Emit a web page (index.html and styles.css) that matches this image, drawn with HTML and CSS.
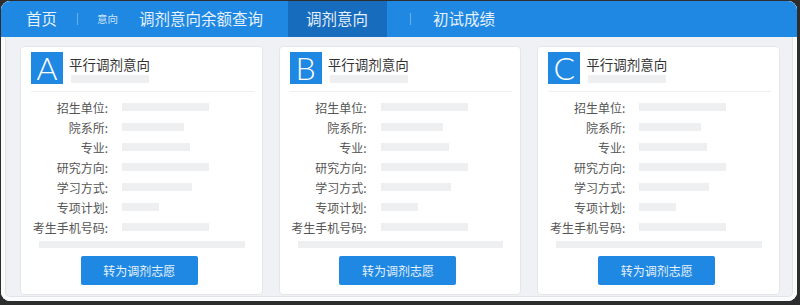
FILE: index.html
```html
<!DOCTYPE html>
<html lang="zh-CN">
<head>
<meta charset="utf-8">
<title>调剂意向</title>
<link rel="stylesheet" href="styles.css">
</head>
<body>
<div class="window">
  <nav class="nav">
    <span class="nav-item home">首页</span>
    <span class="sep"></span>
    <span class="nav-item small">意向</span>
    <span class="nav-item query">调剂意向余额查询</span>
    <span class="nav-item active">调剂意向</span>
    <span class="sep sep2"></span>
    <span class="nav-item score">初试成绩</span>
  </nav>
  <main class="cards">
    <section class="card">
      <div class="card-head">
        <div class="letter">A</div>
        <div class="head-text">
          <div class="title">平行调剂意向</div>
          <div class="bar title-bar"></div>
        </div>
      </div>
      <div class="rows">
        <div class="row"><span class="label">招生单位:</span><span class="bar" style="width:87px"></span></div>
        <div class="row"><span class="label">院系所:</span><span class="bar" style="width:62px"></span></div>
        <div class="row"><span class="label">专业:</span><span class="bar" style="width:68px"></span></div>
        <div class="row"><span class="label">研究方向:</span><span class="bar" style="width:87px"></span></div>
        <div class="row"><span class="label">学习方式:</span><span class="bar" style="width:70px"></span></div>
        <div class="row"><span class="label">专项计划:</span><span class="bar" style="width:37px"></span></div>
        <div class="row"><span class="label">考生手机号码:</span><span class="bar" style="width:87px"></span></div>
      </div>
      <div class="bar wide-bar"></div>
      <button class="btn">转为调剂志愿</button>
    </section>
    <section class="card">
      <div class="card-head">
        <div class="letter">B</div>
        <div class="head-text">
          <div class="title">平行调剂意向</div>
          <div class="bar title-bar"></div>
        </div>
      </div>
      <div class="rows">
        <div class="row"><span class="label">招生单位:</span><span class="bar" style="width:87px"></span></div>
        <div class="row"><span class="label">院系所:</span><span class="bar" style="width:62px"></span></div>
        <div class="row"><span class="label">专业:</span><span class="bar" style="width:68px"></span></div>
        <div class="row"><span class="label">研究方向:</span><span class="bar" style="width:87px"></span></div>
        <div class="row"><span class="label">学习方式:</span><span class="bar" style="width:70px"></span></div>
        <div class="row"><span class="label">专项计划:</span><span class="bar" style="width:37px"></span></div>
        <div class="row"><span class="label">考生手机号码:</span><span class="bar" style="width:87px"></span></div>
      </div>
      <div class="bar wide-bar"></div>
      <button class="btn">转为调剂志愿</button>
    </section>
    <section class="card">
      <div class="card-head">
        <div class="letter">C</div>
        <div class="head-text">
          <div class="title">平行调剂意向</div>
          <div class="bar title-bar"></div>
        </div>
      </div>
      <div class="rows">
        <div class="row"><span class="label">招生单位:</span><span class="bar" style="width:87px"></span></div>
        <div class="row"><span class="label">院系所:</span><span class="bar" style="width:62px"></span></div>
        <div class="row"><span class="label">专业:</span><span class="bar" style="width:68px"></span></div>
        <div class="row"><span class="label">研究方向:</span><span class="bar" style="width:87px"></span></div>
        <div class="row"><span class="label">学习方式:</span><span class="bar" style="width:70px"></span></div>
        <div class="row"><span class="label">专项计划:</span><span class="bar" style="width:37px"></span></div>
        <div class="row"><span class="label">考生手机号码:</span><span class="bar" style="width:87px"></span></div>
      </div>
      <div class="bar wide-bar"></div>
      <button class="btn">转为调剂志愿</button>
    </section>
  </main>
</div>
</body>
</html>
```

FILE: styles.css
```css
* { box-sizing: border-box; }

html, body {
  margin: 0;
  padding: 0;
  width: 800px;
  height: 305px;
  background: #2d2d2d;
  overflow: hidden;
  font-family: "Noto Sans CJK SC", "Noto Sans", sans-serif;
}

.window {
  margin: 1px 3px 0 1px;
  width: 796px;
  height: 300px;
  border-radius: 9px;
  overflow: hidden;
  background: #eff1f4;
  box-shadow: inset 0 0 0 4px #fafbfc, inset 0 0 0 5px #e1e3e6;
  display: flex;
  flex-direction: column;
}

.nav {
  height: 36px;
  flex: none;
  background: #1e88e2;
  display: flex;
  align-items: stretch;
  padding-left: 25px;
  color: #e6f1fc;
}

.nav-item {
  display: flex;
  align-items: center;
  font-size: 15.5px;
  line-height: 1;
  white-space: nowrap;
}

.sep {
  width: 1px;
  height: 12px;
  align-self: center;
  background: rgba(255, 255, 255, 0.35);
  margin-left: 20px;
}

.nav-item.small {
  font-size: 10.5px;
  margin-left: 19px;
  color: #cfe4f8;
}

.nav-item.query { margin-left: 21px; }

.nav-item.active {
  margin-left: 25px;
  padding: 0 19px 0 18px;
  background: #176cbd;
}

.sep2 { margin-left: 23px; }

.nav-item.score { margin-left: 22px; }

.cards {
  flex: 1;
  display: grid;
  grid-template-columns: repeat(3, 1fr);
  column-gap: 16px;
  padding: 9px 17px 6px 19px;
}

.card {
  background: #ffffff;
  border: 1px solid #e4e6e9;
  border-radius: 4px;
  padding: 5px 8px 8px 10px;
  display: flex;
  flex-direction: column;
}

.card-head {
  display: flex;
  gap: 6px;
  padding-bottom: 7px;
  border-bottom: 1px solid #eceef0;
}

.letter {
  width: 32px;
  height: 32px;
  flex: none;
  background: #1e88e2;
  color: #ffffff;
  font-family: Lato, "Liberation Sans", Arial, sans-serif;
  font-weight: 300;
  font-size: 32px;
  line-height: 32px;
  text-align: center;
}

.head-text {
  display: flex;
  flex-direction: column;
  padding-top: 3px;
}

.title {
  font-size: 13.5px;
  line-height: 18px;
  color: #333333;
}

.bar {
  display: block;
  height: 8px;
  background: #eeeff1;
}

.title-bar {
  width: 78px;
  margin-top: 2px;
  margin-left: 2px;
}

.rows {
  display: flex;
  flex-direction: column;
  margin-top: 5px;
  margin-left: -10px;
}

.row {
  display: flex;
  align-items: center;
  height: 20px;
}

.label {
  width: 87px;
  flex: none;
  text-align: right;
  font-size: 12px;
  color: #555555;
}

.row .bar {
  margin-left: 14px;
}

.wide-bar {
  height: 7px;
  margin: 4px 9px 0 8px;
}

.btn {
  margin: 8px auto 0;
  position: relative;
  left: -3px;
  width: 117px;
  height: 29px;
  border: none;
  border-radius: 2px;
  background: #1e88e2;
  color: #e8f2fc;
  font-family: "Noto Sans CJK SC", "Noto Sans", sans-serif;
  font-size: 12px;
  padding: 0;
}
```
